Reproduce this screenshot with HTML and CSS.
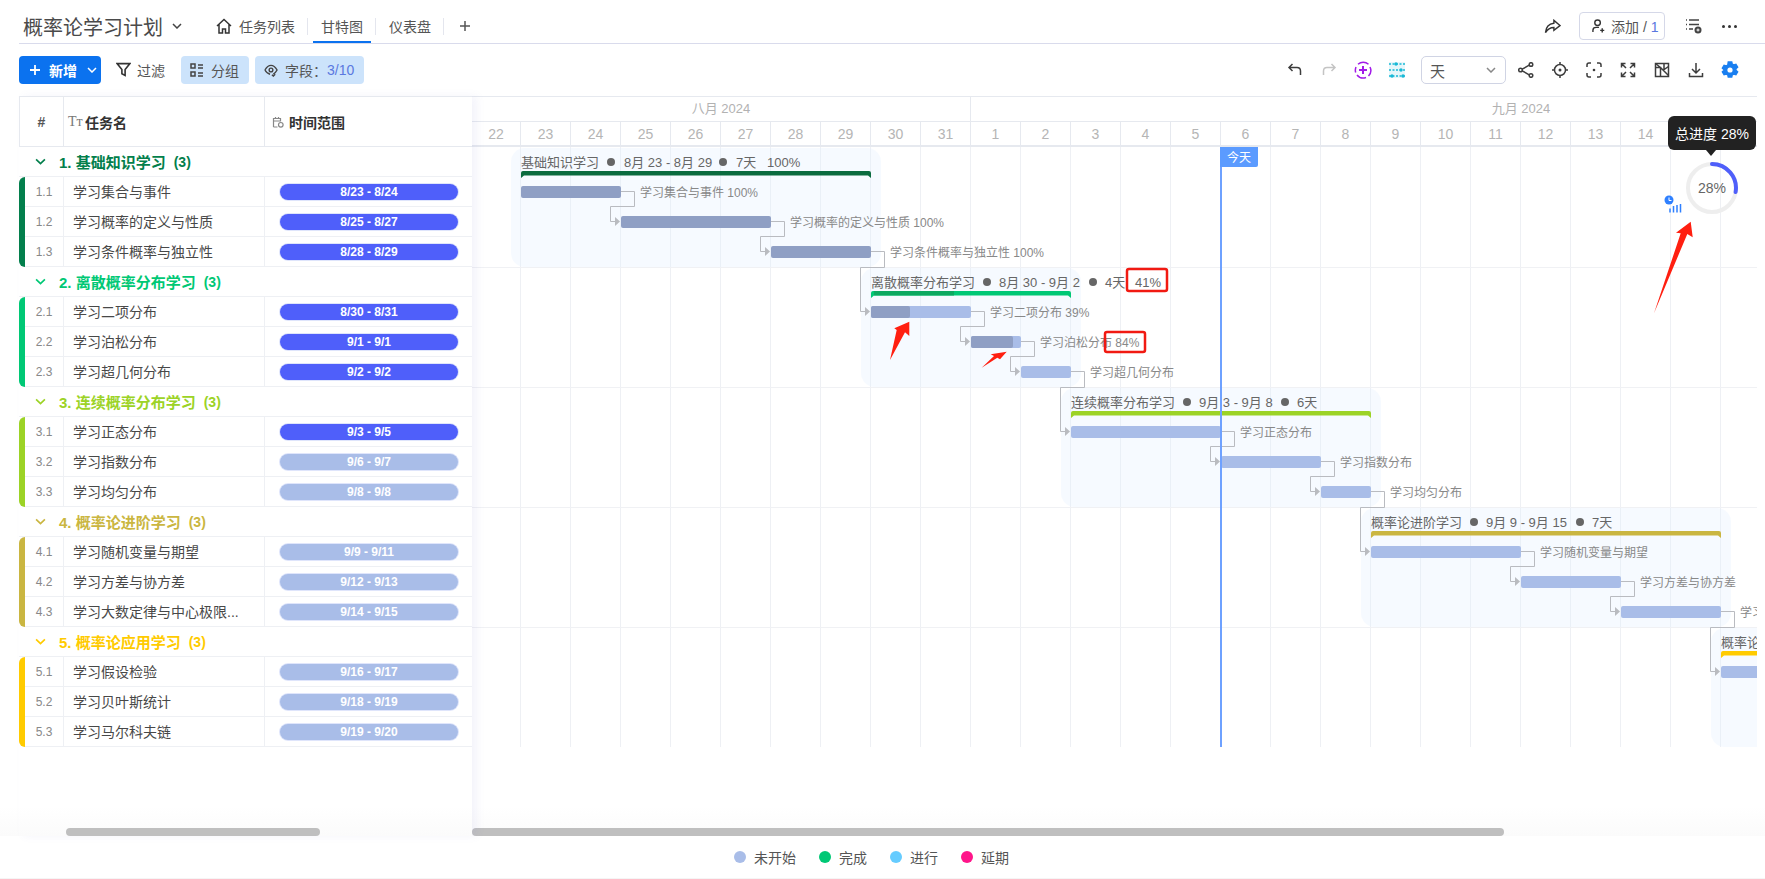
FILE: index.html
```html
<!DOCTYPE html>
<html lang="zh-CN">
<head>
  <meta charset="UTF-8">
  <meta name="viewport" content="width=device-width, initial-scale=1.0">
  <title>概率论学习计划</title>
  <link rel="stylesheet" href="styles.css">
</head>
<body>
  <header class="topbar">
    <div class="title">概率论学习计划</div>
    <svg class="title-caret" viewBox="0 0 10 6"><path d="M1 1l4 4 4-4"/></svg>
    <nav class="tabs">
      <div class="tab">
        <svg class="tab-home" viewBox="0 0 16 16"><path d="M1 8l7-6.500L15 8M3 6.500V15h3.500v-4h3v4H13V6.500"/></svg>
        任务列表
      </div>
      <span class="tab-sep"></span>
      <div class="tab active">甘特图</div>
      <span class="tab-sep"></span>
      <div class="tab">仪表盘</div>
      <span class="tab-sep"></span>
      <div class="tab"><svg class="tab-plus" viewBox="0 0 12 12"><path d="M6 1v10M1 6h10"/></svg></div>
    </nav>
    <div class="topbar-right">
      <svg class="share" viewBox="0 0 18 16"><path d="M10.500 1.500L17 7l-6.500 5V9C6 9 3.500 11 1.500 14.500 2 8.500 5.500 5 10.500 4.500z"/></svg>
      <div class="add-user">
        <svg viewBox="0 0 14 15"><circle cx="6" cy="4" r="3"/><path d="M1 14v-2c0-2 1.500-3 3.500-3h3M11 10v4.500M8.800 12.200h4.400"/></svg>
        <span>添加 / <span class="add-count">1</span></span>
      </div>
      <svg class="list-add" viewBox="0 0 17 16"><path d="M1 2h1M4 2h10M1 6.500h1M4 6.500h10M1 11h1M4 11h4"/><circle class="solid" cx="13" cy="12" r="3.500"/><path class="cut" d="M11.500 12h3M13 10.500v3"/></svg>
      <div class="dots"><i></i><i></i><i></i></div>
    </div>
  </header>

  <div class="toolbar">
    <button class="btn-new">
      <svg viewBox="0 0 10 10"><path d="M5 0v10M0 5h10"/></svg>
      新增
      <svg class="btn-new-caret" viewBox="0 0 10 6"><path d="M1 1l4 4 4-4"/></svg>
    </button>
    <div class="tool-text">
      <svg viewBox="0 0 14 14"><path d="M1 1.500h12L8.500 7v5.500l-3-1.500V7z"/></svg>
      过滤
    </div>
    <div class="tool-chip chip-group">
      <svg viewBox="0 0 14 14"><rect x="1" y="1" width="4" height="4"/><rect x="1" y="9" width="4" height="4"/><path d="M8 2h5M8 5h5M8 10h5M8 13h5"/></svg>
      分组
    </div>
    <div class="tool-chip chip-field">
      <svg viewBox="0 0 15 14"><path d="M1 7c2-3.500 4-5 6.500-5S12 3.500 14 7c-1 2-2.500 3.500-4 4.300"/><path d="M1 7c1.200 2.200 3 4 5.500 4.500"/><circle cx="7.500" cy="7" r="2"/><path d="M8.500 12l1.500 1.500 2-2"/></svg>
      字段：<span class="field-count">3/10</span>
    </div>
    <div class="toolbar-right">
      <span class="icon-btn"><svg viewBox="0 0 16 16"><path d="M5.500 2L2 5.500 5.500 9M2 5.500h8c2.500 0 3.500 1.500 3.500 3.500v4"/></svg></span>
      <span class="icon-btn muted"><svg viewBox="0 0 16 16"><path d="M10.500 2L14 5.500 10.500 9M14 5.500H6C3.500 5.500 2.500 7 2.500 9v4"/></svg></span>
      <span class="icon-btn purple"><svg viewBox="0 0 18 18"><path d="M4 3.200A8 8 0 0 1 14.500 3.200M16 6a8 8 0 0 1-1.500 9M12 16.500a8 8 0 0 1-9-2.500M1.700 11.500A8 8 0 0 1 2 6"/><path class="thick" d="M9 5v8M5 9h8"/></svg></span>
      <span class="icon-btn teal"><svg viewBox="0 0 18 18"><rect x="1" y="1" width="16" height="16" class="teal-bg"/><path class="teal-dash" d="M1 3h16M1 9h16M1 15h16"/><circle cx="8" cy="3" r="1.700"/><circle cx="13" cy="9" r="1.700"/><circle cx="4" cy="15" r="1.700"/><circle cx="15" cy="15" r="1.700"/></svg></span>
      <div class="range-select">
        天
        <svg viewBox="0 0 10 6"><path d="M1 1l4 4 4-4"/></svg>
      </div>
      <span class="icon-btn"><svg viewBox="0 0 16 16"><circle cx="2.500" cy="8" r="1.800"/><circle cx="13" cy="2.500" r="1.800"/><circle cx="13" cy="13.500" r="1.800"/><path d="M4.200 7.200l7-4M4.200 8.800l7 4"/></svg></span>
      <span class="icon-btn"><svg viewBox="0 0 16 16"><circle cx="8" cy="8" r="5.500"/><circle class="solid" cx="8" cy="8" r="1.500"/><path d="M8 0v2.500M8 13.500V16M0 8h2.500M13.500 8H16"/></svg></span>
      <span class="icon-btn"><svg viewBox="0 0 16 16"><path d="M1 5V3a2 2 0 0 1 2-2h2M11 1h2a2 2 0 0 1 2 2v2M15 11v2a2 2 0 0 1-2 2h-2M5 15H3a2 2 0 0 1-2-2v-2"/><circle class="solid" cx="8" cy="8" r="1.300"/></svg></span>
      <span class="icon-btn"><svg viewBox="0 0 16 16"><path d="M1.500 5.500v-4h4M14.500 5.500v-4h-4M1.500 10.500v4h4M14.500 10.500v4h-4M1.500 1.500L6 6M14.500 1.500L10 6M1.500 14.500L6 10M14.500 14.500L10 10"/></svg></span>
      <span class="icon-btn"><svg viewBox="0 0 16 16"><rect x="1.500" y="1.500" width="13" height="13"/><path d="M1.500 5.500h5v9M6.500 5.500L14.500 13.500M1.500 1.500l5 4M10 1.500v6l4.500-3"/></svg></span>
      <span class="icon-btn"><svg viewBox="0 0 16 16"><path d="M8 1v9.500M4 7l4 4 4-4M1.500 11v3.500h13V11"/></svg></span>
      <span class="icon-btn gear"><svg viewBox="0 0 18 18"><path d="M7.300 1h3.400l.5 2.200 1.500.8 2.200-.7 1.700 2.900-1.700 1.600v1.400l1.700 1.600-1.700 2.900-2.200-.7-1.500.8-.5 2.200H7.300l-.5-2.200-1.500-.8-2.200.7-1.700-2.900 1.700-1.600V8.800L1.400 7.200l1.700-2.900 2.200.7 1.500-.8z"/><circle cx="9" cy="9" r="2.600"/></svg></span>
    </div>
  </div>

  <main class="board">
    <section class="task-list">
      <div class="list-head">
        <div class="col-num">#</div>
        <div class="col-name"><span class="type-mark">Tт</span>任务名</div>
        <div class="col-time">
          <svg viewBox="0 0 12 12"><path d="M1.500 11V2.500h7v3M1.500 5h7M3.500 1v2M6.500 1v2M1.500 11h4"/><circle cx="8.800" cy="8.800" r="2.300"/></svg>
          时间范围
        </div>
      </div>

      <div class="group g1">
        <div class="group-head"><svg viewBox="0 0 10 6"><path d="M1 1l4 4 4-4"/></svg>1. 基础知识学习<span class="group-count">(3)</span></div>
        <div class="group-rows">
          <div class="row"><div class="num">1.1</div><div class="name">学习集合与事件</div><div class="time"><span class="pill on">8/23 - 8/24</span></div></div>
          <div class="row"><div class="num">1.2</div><div class="name">学习概率的定义与性质</div><div class="time"><span class="pill on">8/25 - 8/27</span></div></div>
          <div class="row"><div class="num">1.3</div><div class="name">学习条件概率与独立性</div><div class="time"><span class="pill on">8/28 - 8/29</span></div></div>
        </div>
      </div>

      <div class="group g2">
        <div class="group-head"><svg viewBox="0 0 10 6"><path d="M1 1l4 4 4-4"/></svg>2. 离散概率分布学习<span class="group-count">(3)</span></div>
        <div class="group-rows">
          <div class="row"><div class="num">2.1</div><div class="name">学习二项分布</div><div class="time"><span class="pill on">8/30 - 8/31</span></div></div>
          <div class="row"><div class="num">2.2</div><div class="name">学习泊松分布</div><div class="time"><span class="pill on">9/1 - 9/1</span></div></div>
          <div class="row"><div class="num">2.3</div><div class="name">学习超几何分布</div><div class="time"><span class="pill on">9/2 - 9/2</span></div></div>
        </div>
      </div>

      <div class="group g3">
        <div class="group-head"><svg viewBox="0 0 10 6"><path d="M1 1l4 4 4-4"/></svg>3. 连续概率分布学习<span class="group-count">(3)</span></div>
        <div class="group-rows">
          <div class="row"><div class="num">3.1</div><div class="name">学习正态分布</div><div class="time"><span class="pill on">9/3 - 9/5</span></div></div>
          <div class="row"><div class="num">3.2</div><div class="name">学习指数分布</div><div class="time"><span class="pill">9/6 - 9/7</span></div></div>
          <div class="row"><div class="num">3.3</div><div class="name">学习均匀分布</div><div class="time"><span class="pill">9/8 - 9/8</span></div></div>
        </div>
      </div>

      <div class="group g4">
        <div class="group-head"><svg viewBox="0 0 10 6"><path d="M1 1l4 4 4-4"/></svg>4. 概率论进阶学习<span class="group-count">(3)</span></div>
        <div class="group-rows">
          <div class="row"><div class="num">4.1</div><div class="name">学习随机变量与期望</div><div class="time"><span class="pill">9/9 - 9/11</span></div></div>
          <div class="row"><div class="num">4.2</div><div class="name">学习方差与协方差</div><div class="time"><span class="pill">9/12 - 9/13</span></div></div>
          <div class="row"><div class="num">4.3</div><div class="name">学习大数定律与中心极限...</div><div class="time"><span class="pill">9/14 - 9/15</span></div></div>
        </div>
      </div>

      <div class="group g5">
        <div class="group-head"><svg viewBox="0 0 10 6"><path d="M1 1l4 4 4-4"/></svg>5. 概率论应用学习<span class="group-count">(3)</span></div>
        <div class="group-rows">
          <div class="row"><div class="num">5.1</div><div class="name">学习假设检验</div><div class="time"><span class="pill">9/16 - 9/17</span></div></div>
          <div class="row"><div class="num">5.2</div><div class="name">学习贝叶斯统计</div><div class="time"><span class="pill">9/18 - 9/19</span></div></div>
          <div class="row"><div class="num">5.3</div><div class="name">学习马尔科夫链</div><div class="time"><span class="pill">9/19 - 9/20</span></div></div>
        </div>
      </div>

      <div class="list-scroll"><div class="thumb"></div></div>
    </section>

    <section class="timeline">
      <div class="months">
        <div class="month month-aug">八月 2024</div>
        <div class="month month-sep">九月 2024</div>
      </div>
      <div class="days">
        <div class="day first">22</div><div class="day">23</div><div class="day">24</div><div class="day">25</div><div class="day">26</div><div class="day">27</div><div class="day">28</div><div class="day">29</div><div class="day">30</div><div class="day">31</div>
        <div class="day">1</div><div class="day">2</div><div class="day">3</div><div class="day">4</div><div class="day">5</div><div class="day">6</div><div class="day">7</div><div class="day">8</div><div class="day">9</div><div class="day">10</div><div class="day">11</div><div class="day">12</div><div class="day">13</div><div class="day">14</div><div class="day">15</div><div class="day">16</div>
      </div>
      <div class="gantt-area">
        <!-- chart drawn in page coordinates, hence the viewBox offset -->
        <svg class="gantt" width="1285" height="600" viewBox="472 147 1285 600">
          <path class="row-line" d="M472 267.500H1757M472 387.500H1757M472 507.500H1757M472 627.500H1757"/>

          <rect class="span" x="511" y="148" width="370" height="119" rx="14"/>
          <rect class="span" x="861" y="268" width="220" height="119" rx="14"/>
          <rect class="span" x="1061" y="388" width="320" height="119" rx="14"/>
          <rect class="span" x="1361" y="508" width="370" height="119" rx="14"/>
          <rect class="span" x="1711" y="628" width="120" height="119" rx="14"/>

          <g class="links">
            <path d="M621 191.500H634.500V206.500H610.500V221.500H616"/>
            <path d="M771 221.500H784.500V236.500H760.500V251.500H766"/>
            <path d="M871 251.500H884.500V267.500H860.500V311.500H866"/>
            <path d="M971 311.500H984.500V326.500H960.500V341.500H966"/>
            <path d="M1021 341.500H1034.500V356.500H1010.500V371.500H1016"/>
            <path d="M1071 371.500H1084.500V387.500H1060.500V431.500H1066"/>
            <path d="M1221 431.500H1234.500V446.500H1210.500V461.500H1216"/>
            <path d="M1321 461.500H1334.500V476.500H1310.500V491.500H1316"/>
            <path d="M1371 491.500H1384.500V507.500H1360.500V551.500H1366"/>
            <path d="M1521 551.500H1534.500V566.500H1510.500V581.500H1516"/>
            <path d="M1621 581.500H1634.500V596.500H1610.500V611.500H1616"/>
            <path d="M1721 611.500H1734.500V627.500H1710.500V671.500H1716"/>
          </g>
          <g class="link-heads">
            <path d="M615 217l5 4.500-5 4.500z"/><path d="M765 247l5 4.500-5 4.500z"/><path d="M865 307l5 4.500-5 4.500z"/>
            <path d="M965 337l5 4.500-5 4.500z"/><path d="M1015 367l5 4.500-5 4.500z"/><path d="M1065 427l5 4.500-5 4.500z"/>
            <path d="M1215 457l5 4.500-5 4.500z"/><path d="M1315 487l5 4.500-5 4.500z"/><path d="M1365 547l5 4.500-5 4.500z"/>
            <path d="M1515 577l5 4.500-5 4.500z"/><path d="M1615 607l5 4.500-5 4.500z"/><path d="M1715 667l5 4.500-5 4.500z"/>
          </g>

          <g class="summary">
            <text x="521" y="166.500">基础知识学习</text><circle cx="611" cy="162" r="4"/><text x="624" y="166.500">8月 23 - 8月 29</text><circle cx="723" cy="162" r="4"/><text x="736" y="166.500">7天</text><text x="767" y="166.500">100%</text>
            <text x="871" y="286.500">离散概率分布学习</text><circle cx="987" cy="282" r="4"/><text x="999" y="286.500">8月 30 - 9月 2</text><circle cx="1093" cy="282" r="4"/><text x="1105" y="286.500">4天</text><text x="1135" y="286.500">41%</text>
            <text x="1071" y="406.500">连续概率分布学习</text><circle cx="1187" cy="402" r="4"/><text x="1199" y="406.500">9月 3 - 9月 8</text><circle cx="1285" cy="402" r="4"/><text x="1297" y="406.500">6天</text>
            <text x="1371" y="526.500">概率论进阶学习</text><circle cx="1474" cy="522" r="4"/><text x="1486" y="526.500">9月 9 - 9月 15</text><circle cx="1580" cy="522" r="4"/><text x="1592" y="526.500">7天</text>
            <text x="1721" y="646.500">概率论应用学习</text>
          </g>

          <path class="sum-g1" d="M521 173a2 2 0 0 1 2-2H869a2 2 0 0 1 2 2V178l-3-2.500H524L521 178z"/>
          <path class="sum-g2" d="M871 293a2 2 0 0 1 2-2H1069a2 2 0 0 1 2 2V298l-3-2.500H874L871 298z"/>
          <rect class="sum-g2-done" x="874" y="291" width="80" height="4.500"/>
          <path class="sum-g3" d="M1071 413a2 2 0 0 1 2-2H1369a2 2 0 0 1 2 2V418l-3-2.500H1074L1071 418z"/>
          <path class="sum-g4" d="M1371 533a2 2 0 0 1 2-2H1719a2 2 0 0 1 2 2V538l-3-2.500H1374L1371 538z"/>
          <path class="sum-g5" d="M1721 653a2 2 0 0 1 2-2H1790V655.500H1724L1721 658z"/>

          <rect class="bar done" x="521" y="186" width="100" height="12" rx="2"/>
          <rect class="bar done" x="621" y="216" width="150" height="12" rx="2"/>
          <rect class="bar done" x="771" y="246" width="100" height="12" rx="2"/>
          <rect class="bar" x="871" y="306" width="100" height="12" rx="2"/>
          <rect class="bar done" x="871" y="306" width="39" height="12" rx="2"/>
          <rect class="bar" x="971" y="336" width="50" height="12" rx="2"/>
          <rect class="bar done" x="971" y="336" width="42" height="12" rx="2"/>
          <rect class="bar" x="1021" y="366" width="50" height="12" rx="2"/>
          <rect class="bar" x="1071" y="426" width="150" height="12" rx="2"/>
          <rect class="bar" x="1221" y="456" width="100" height="12" rx="2"/>
          <rect class="bar" x="1321" y="486" width="50" height="12" rx="2"/>
          <rect class="bar" x="1371" y="546" width="150" height="12" rx="2"/>
          <rect class="bar" x="1521" y="576" width="100" height="12" rx="2"/>
          <rect class="bar" x="1621" y="606" width="100" height="12" rx="2"/>
          <rect class="bar" x="1721" y="666" width="100" height="12" rx="2"/>

          <g class="bar-labels">
            <text x="640" y="197">学习集合与事件 100%</text>
            <text x="790" y="227">学习概率的定义与性质 100%</text>
            <text x="890" y="257">学习条件概率与独立性 100%</text>
            <text x="990" y="317">学习二项分布 39%</text>
            <text x="1040" y="347">学习泊松分布 84%</text>
            <text x="1090" y="377">学习超几何分布</text>
            <text x="1240" y="437">学习正态分布</text>
            <text x="1340" y="467">学习指数分布</text>
            <text x="1390" y="497">学习均匀分布</text>
            <text x="1540" y="557">学习随机变量与期望</text>
            <text x="1640" y="587">学习方差与协方差</text>
            <text x="1740" y="617">学习大数定律与中心极限定理</text>
          </g>

          <rect class="today-line" x="1220" y="147" width="2" height="600"/>
          <path class="today-tag" d="M1220 147H1258V165a2 2 0 0 1-2 2H1220z"/>
          <text class="today-text" x="1227" y="161.500">今天</text>
        </svg>
      </div>
      <div class="timeline-scroll"><div class="thumb"></div></div>
    </section>
  </main>

  <footer class="legend">
    <div class="legend-item"><i class="dot-todo"></i>未开始</div>
    <div class="legend-item"><i class="dot-done"></i>完成</div>
    <div class="legend-item"><i class="dot-doing"></i>进行</div>
    <div class="legend-item"><i class="dot-late"></i>延期</div>
  </footer>

  <div class="progress-tip">总进度 28%</div>
  <div class="progress-ring">
    <svg viewBox="0 0 52 52">
      <circle class="ring-bg" cx="26" cy="26" r="24"/>
      <path class="ring-fg" d="M26 2A24 24 0 0 1 49.600 30"/>
    </svg>
    <span>28%</span>
  </div>
  <svg class="progress-mini" viewBox="0 0 18 18">
    <circle cx="5" cy="5" r="4.500"/>
    <path class="mini-hand" d="M5 2.500v3h2.500"/>
    <path class="mini-bars" d="M6 17.500v-4M9.500 17.500v-6.500M13 17.500v-7.500M16.500 17.500V9"/>
  </svg>

  <svg class="notes" width="1765" height="879" viewBox="0 0 1765 879">
    <rect x="1127" y="269" width="40" height="22" rx="2"/>
    <rect x="1105" y="332" width="40" height="20" rx="2"/>
    <polygon points="890,360 896.700,330 894.300,328.300 909.300,321.700 909.300,336 905,332.300"/>
    <polygon points="981.700,367.700 994,356 990.700,354.300 1006.700,351.700 1000,359.300 997.300,357.700"/>
    <polygon points="1654,313.300 1680.700,233.300 1676,232.700 1690.700,221.700 1692.700,237.300 1687.300,234"/>
  </svg>
</body>
</html>
```

FILE: styles.css
```css
* {
  box-sizing: border-box;
  margin: 0;
  padding: 0;
}

body {
  width: 1765px;
  height: 879px;
  position: relative;
  overflow: hidden;
  background: #ffffff;
  color: #444444;
  font-family: "Liberation Sans", "Noto Sans CJK SC", sans-serif;
  font-size: 14px;
}

svg {
  fill: none;
  stroke: currentColor;
  stroke-width: 1.5;
  display: block;
  flex-shrink: 0;
}

/* top bar */
.topbar {
  height: 44px;
  margin-left: 19px;
  padding: 9px 0 0 4px;
  display: flex;
  align-items: center;
  border-bottom: 1px solid #d9dbec;
}

.title {
  font-size: 20px;
  color: #4a4a4a;
}

.title-caret {
  width: 10px;
  height: 6px;
  margin-left: 9px;
  color: #444444;
}

.tabs {
  display: flex;
  align-items: center;
  height: 100%;
  margin-left: 26px;
}

.tab {
  height: 34px;
  padding: 0 8px;
  display: flex;
  align-items: center;
  color: #555555;
}

.tab.active {
  border-bottom: 2px solid #0b72ef;
  padding-top: 2px;
}

.tab-home {
  width: 16px;
  height: 16px;
  margin-right: 7px;
  color: #333333;
}

.tab-plus {
  width: 12px;
  height: 12px;
  margin: 0 2px;
  color: #555555;
}

.tab-sep {
  width: 1px;
  height: 17px;
  margin: 0 5px 0 4px;
  background: #e4e6ee;
}

.topbar-right {
  margin-left: auto;
  display: flex;
  align-items: center;
  padding-right: 28px;
}

.share {
  width: 17px;
  height: 15px;
  margin-right: 18px;
  color: #333333;
}

.add-user {
  width: 86px;
  height: 28px;
  display: flex;
  align-items: center;
  padding-left: 12px;
  border: 1px solid #d5d8e8;
  border-radius: 4px;
  color: #555555;
}

.add-user svg {
  width: 13px;
  height: 14px;
  margin-right: 6px;
  color: #333333;
}

.add-count {
  color: #5a78e0;
}

.list-add {
  width: 17px;
  height: 16px;
  margin-left: 20px;
  color: #444444;
}

.list-add .solid {
  fill: #444444;
  stroke: none;
}

.list-add .cut {
  stroke: #ffffff;
  stroke-width: 1;
}

.dots {
  display: flex;
  gap: 3px;
  margin-left: 20px;
}

.dots i {
  width: 3px;
  height: 3px;
  border-radius: 50%;
  background: #333333;
}

/* toolbar */
.toolbar {
  height: 52px;
  padding: 12px 18px 12px 19px;
  display: flex;
  align-items: stretch;
}

.btn-new {
  width: 82px;
  display: flex;
  align-items: center;
  padding-left: 11px;
  padding-bottom: 1px;
  border: 0;
  border-radius: 4px;
  background: #0b72ef;
  color: #ffffff;
  font: inherit;
  font-weight: 700;
}

.btn-new svg {
  width: 10px;
  height: 10px;
  margin-right: 9px;
  stroke-width: 1.8;
}

.btn-new .btn-new-caret {
  height: 6px;
  margin: 0 0 0 10px;
  stroke-width: 1.5;
}

.tool-text {
  display: flex;
  align-items: center;
  margin-left: 15px;
  padding-bottom: 1px;
  color: #555555;
}

.tool-text svg {
  width: 15px;
  height: 15px;
  margin-right: 6px;
  color: #333333;
}

.tool-chip {
  display: flex;
  align-items: center;
  padding-bottom: 1px;
  border-radius: 4px;
  background: #cce3fb;
  color: #555555;
}

.tool-chip svg {
  width: 14px;
  height: 14px;
  margin-right: 7px;
  color: #444444;
}

.chip-group {
  width: 68px;
  margin-left: 16px;
  padding-left: 9px;
}

.chip-field {
  width: 109px;
  margin-left: 6px;
  padding-left: 9px;
}

.field-count {
  color: #5a78e0;
}

.toolbar-right {
  margin-left: auto;
  display: flex;
  align-items: center;
}

.icon-btn {
  width: 34px;
  display: flex;
  justify-content: center;
  color: #3d3d3d;
}

.icon-btn svg {
  width: 16px;
  height: 16px;
}

.icon-btn.muted {
  color: #c4c4c4;
}

.icon-btn.purple {
  color: #a21be8;
}

.icon-btn.purple svg {
  width: 18px;
  height: 18px;
}

.icon-btn .thick {
  stroke-width: 2;
}

.icon-btn.teal {
  color: #18b9d6;
}

.icon-btn.teal svg {
  width: 18px;
  height: 18px;
}

.icon-btn.teal circle {
  fill: #18b9d6;
  stroke: none;
}

.teal-dash {
  stroke-dasharray: 2 1.500;
  stroke-width: 1.500;
}

.icon-btn .teal-bg {
  fill: #e6f6fa;
  stroke: none;
}

.icon-btn .solid {
  fill: currentColor;
  stroke: none;
}

.icon-btn.gear {
  color: #1a7ff0;
}

.icon-btn.gear svg {
  width: 18px;
  height: 18px;
  fill: #1a7ff0;
}

.icon-btn.gear circle {
  fill: #ffffff;
  stroke: none;
}

.range-select {
  width: 85px;
  height: 28px;
  margin: 0 3px 0 7px;
  padding: 0 9px 0 8px;
  display: flex;
  align-items: center;
  justify-content: space-between;
  border: 1px solid #d0d4e4;
  border-radius: 5px;
  font-size: 15px;
  color: #555555;
}

.range-select svg {
  width: 10px;
  height: 6px;
  color: #888888;
}

/* board */
.board {
  height: 740px;
  display: flex;
  background: linear-gradient(to bottom, #ffffff 96%, #fbfbfb 100%);
}

.task-list {
  width: 453px;
  margin-left: 19px;
  position: relative;
  z-index: 2;
  background: linear-gradient(to bottom, #ffffff 96%, #fbfbfb 100%);
  box-shadow: 5px 0 8px rgba(110, 120, 210, 0.08);
}

.list-head {
  height: 51px;
  display: flex;
  border-top: 1px solid #e6e9ef;
  border-left: 1px solid #e6e9ef;
  border-bottom: 1px solid #e6e9ef;
  font-weight: 700;
  color: #333333;
}

.list-head > div {
  display: flex;
  align-items: center;
}

.col-num {
  width: 44px;
  justify-content: center;
  border-right: 1px solid #e6e9ef;
  color: #555555;
}

.col-name {
  width: 201px;
  padding-left: 4px;
  border-right: 1px solid #e6e9ef;
}

.type-mark {
  width: 17px;
  font-family: "Liberation Serif", serif;
  font-weight: 400;
  color: #777777;
}

.col-time {
  padding-left: 7px;
}

.col-time svg {
  width: 12px;
  height: 12px;
  margin-right: 5px;
  color: #888888;
  stroke-width: 1.200;
}

.group-head {
  height: 30px;
  padding-left: 16px;
  display: flex;
  align-items: center;
  border-bottom: 1px solid #eef0f4;
  font-size: 15px;
  font-weight: 700;
}

.group-head svg {
  width: 11px;
  height: 7px;
  margin-right: 13px;
}

.group-count {
  margin-left: 8px;
  font-size: 14px;
}

.group-rows {
  border-left: 6px solid;
  border-radius: 6px 0 0 6px;
}

.g1 .group-head { color: #037f4c; }
.g1 .group-rows { border-color: #037f4c; }
.g2 .group-head { color: #00c875; }
.g2 .group-rows { border-color: #00c875; }
.g3 .group-head { color: #9cd326; }
.g3 .group-rows { border-color: #9cd326; }
.g4 .group-head { color: #cab641; }
.g4 .group-rows { border-color: #cab641; }
.g5 .group-head { color: #ffcb00; }
.g5 .group-rows { border-color: #ffcb00; }

.row {
  height: 30px;
  display: flex;
  align-items: center;
  border-bottom: 1px solid #eef0f4;
}

.num {
  width: 39px;
  height: 100%;
  padding-top: 1px;
  display: flex;
  align-items: center;
  justify-content: center;
  border-right: 1px solid #eef0f4;
  font-size: 12px;
  color: #888888;
}

.name {
  width: 201px;
  height: 100%;
  padding: 0 0 1px 9px;
  display: flex;
  align-items: center;
  border-right: 1px solid #eef0f4;
  color: #484848;
}

.time {
  flex: 1;
  display: flex;
}

.pill {
  width: 178px;
  height: 16px;
  margin-left: 15px;
  padding-top: 1px;
  display: flex;
  align-items: center;
  justify-content: center;
  border-radius: 8px;
  background: #a9bde8;
  box-shadow: 0 0 0 1px #dfe5fb;
  font-size: 12px;
  font-weight: 700;
  color: #ffffff;
}

.pill.on {
  background: #4f5ffa;
}

.list-scroll,
.timeline-scroll {
  position: absolute;
  bottom: 0;
  left: 0;
  right: 0;
  height: 8px;
}

.thumb {
  height: 8px;
  border-radius: 4px;
  background: #bfbfbf;
}

.list-scroll .thumb {
  width: 254px;
  margin-left: 47px;
}

/* timeline */
.timeline {
  width: 1285px;
  position: relative;
  overflow: hidden;
}

.timeline-scroll .thumb {
  width: 1032px;
}

.months {
  height: 26px;
  display: flex;
  border-top: 1px solid #e6e9ef;
  border-bottom: 1px solid #e6e9ef;
  font-size: 13px;
  color: #b2b2b2;
}

.month {
  flex-shrink: 0;
  padding-bottom: 3px;
  display: flex;
  align-items: center;
  justify-content: center;
}

.month-aug {
  width: 499px;
  border-right: 1px solid #e6e9ef;
}

.month-sep {
  width: 1100px;
}

.days {
  height: 25px;
  display: flex;
  border-bottom: 2px solid #e6e9ef;
  font-size: 14px;
  color: #b5b5b5;
}

.day {
  width: 50px;
  flex-shrink: 0;
  display: flex;
  align-items: center;
  justify-content: center;
  border-right: 1px solid #e6e9ef;
}

.day.first {
  width: 49px;
}

.gantt-area {
  width: 1285px;
  height: 600px;
  background-image: linear-gradient(to right, #eef0f4 1px, transparent 1px);
  background-size: 50px 600px;
  background-position: 48px 0;
  background-repeat: repeat-x;
}

.gantt {
  stroke: none;
}

.row-line {
  stroke: #f0f1f4;
  stroke-width: 1;
}

.span {
  fill: rgba(226, 238, 255, 0.32);
}

.links path {
  stroke: #b9bbc0;
  stroke-width: 1;
}

.link-heads path {
  fill: #b9bbc0;
}

.summary text {
  font-size: 13px;
  fill: #666666;
}

.summary circle {
  fill: #666666;
}

.sum-g1 { fill: #0a6b3f; }
.sum-g2 { fill: #00c875; }
.sum-g2-done { fill: #0ca960; }
.sum-g3 { fill: #9cd326; }
.sum-g4 { fill: #cab641; }
.sum-g5 { fill: #ffcb00; }

.bar {
  fill: #a9bde8;
}

.bar.done {
  fill: #8f9fc4;
}

.bar-labels text {
  font-size: 12px;
  fill: #888888;
}

.today-line {
  fill: #6ea1ff;
}

.today-tag {
  fill: #5b9bff;
}

.today-text {
  font-size: 12px;
  fill: #ffffff;
}

/* legend */
.legend {
  height: 43px;
  padding-right: 22px;
  display: flex;
  align-items: center;
  justify-content: center;
  gap: 23px;
  border-bottom: 1px solid #f5f5f5;
  color: #555555;
}

.legend-item {
  display: flex;
  align-items: center;
  gap: 8px;
}

.legend-item i {
  width: 12px;
  height: 12px;
  border-radius: 50%;
}

.dot-todo { background: #a9bde8; }
.dot-done { background: #00c875; }
.dot-doing { background: #66ccff; }
.dot-late { background: #ff158a; }

/* floating bits over the chart */
.progress-tip {
  position: absolute;
  left: 1668px;
  top: 116px;
  width: 88px;
  height: 34px;
  z-index: 3;
  display: flex;
  align-items: center;
  justify-content: center;
  border-radius: 6px;
  background: #222222;
  color: #ffffff;
  white-space: nowrap;
}

.progress-tip::after {
  content: "";
  position: absolute;
  left: 38px;
  top: 34px;
  border: 5px solid transparent;
  border-top: 6px solid #222222;
  border-bottom: 0;
}

.progress-ring {
  position: absolute;
  left: 1686px;
  top: 162px;
  width: 52px;
  height: 52px;
  z-index: 3;
  display: flex;
  align-items: center;
  justify-content: center;
  font-size: 14px;
  color: #666666;
}

.progress-ring svg {
  position: absolute;
  inset: 0;
  stroke-width: 4;
}

.ring-bg {
  stroke: #eeeeee;
}

.ring-fg {
  stroke: #4f5ffa;
  stroke-linecap: round;
}

.progress-mini {
  position: absolute;
  left: 1664px;
  top: 195px;
  width: 18px;
  height: 18px;
  z-index: 3;
  color: #2f80ff;
}

.progress-mini circle {
  fill: #2f80ff;
  stroke: none;
}

.mini-hand {
  stroke: #ffffff;
  stroke-width: 1;
}

.notes {
  position: absolute;
  left: 0;
  top: 0;
  z-index: 4;
  pointer-events: none;
  stroke: none;
}

.notes rect {
  stroke: #f11a12;
  stroke-width: 2.500;
}

.notes polygon {
  fill: #ff1f10;
}
```
